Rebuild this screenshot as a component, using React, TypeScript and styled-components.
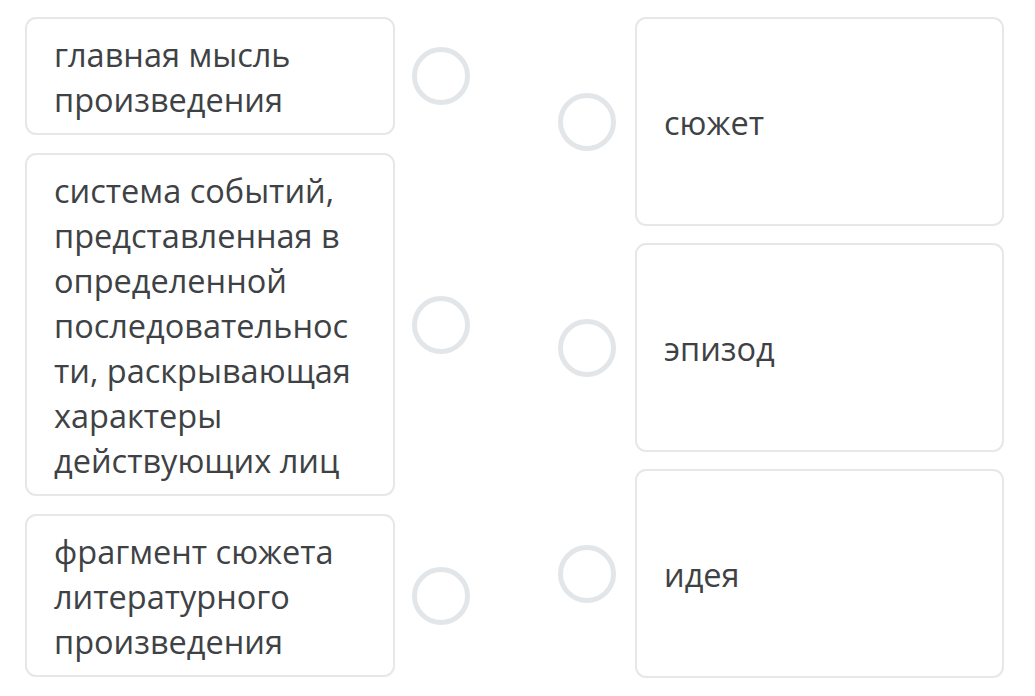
import * as React from 'react';
import styled, { createGlobalStyle } from 'styled-components';

const GlobalStyle = createGlobalStyle`
  html, body {
    margin: 0;
    padding: 0;
    background: #ffffff;
  }
  body {
    font-family: 'Open Sans', 'Noto Sans', sans-serif;
  }
`;

const leftItems = [
  'главная мысль произведения',
  'система событий, представленная в определенной последовательности, раскрывающая характеры действующих лиц',
  'фрагмент сюжета литературного произведения',
];

const rightItems = ['сюжет', 'эпизод', 'идея'];

export default function App(): JSX.Element {
  return (
    <>
      <GlobalStyle />
      <Board>
        <Column>
          {leftItems.map((text) => (
            <Row key={text}>
              <Card $width={370}>
                <CardText>{text}</CardText>
              </Card>
              <Dot />
            </Row>
          ))}
        </Column>
        <Column $gap={17}>
          {rightItems.map((text) => (
            <Row key={text} $gap={19}>
              <Dot />
              <Card $width={369} $height={209} $centered>
                <CardText>{text}</CardText>
              </Card>
            </Row>
          ))}
        </Column>
      </Board>
    </>
  );
}

const Board = styled.div`
  display: flex;
  justify-content: space-between;
  align-items: flex-start;
  width: 979px;
  padding: 17px 0 0 25px;
`;

const Column = styled.div<{ $gap?: number }>`
  display: flex;
  flex-direction: column;
  gap: ${({ $gap }) => $gap ?? 18}px;
`;

const Row = styled.div<{ $gap?: number }>`
  display: flex;
  align-items: center;
  gap: ${({ $gap }) => $gap ?? 17}px;
`;

const Card = styled.div<{ $width: number; $height?: number; $centered?: boolean }>`
  box-sizing: border-box;
  width: ${({ $width }) => $width}px;
  ${({ $height }) => ($height ? `height: ${$height}px;` : '')}
  display: flex;
  align-items: ${({ $centered }) => ($centered ? 'center' : 'flex-start')};
  padding: 13px 30px 11px 27px;
  border: 2px solid #e6e7e8;
  border-radius: 11px;
  background: #ffffff;
`;

const CardText = styled.div`
  font-family: 'Open Sans', 'Noto Sans', sans-serif;
  font-size: 32.5px;
  line-height: 45px;
  color: #3e4245;
  overflow-wrap: anywhere;
  min-width: 0;
`;

const Dot = styled.div`
  box-sizing: border-box;
  flex: none;
  width: 58px;
  height: 58px;
  border-radius: 50%;
  border: 5px solid #e3e6e9;
`;
